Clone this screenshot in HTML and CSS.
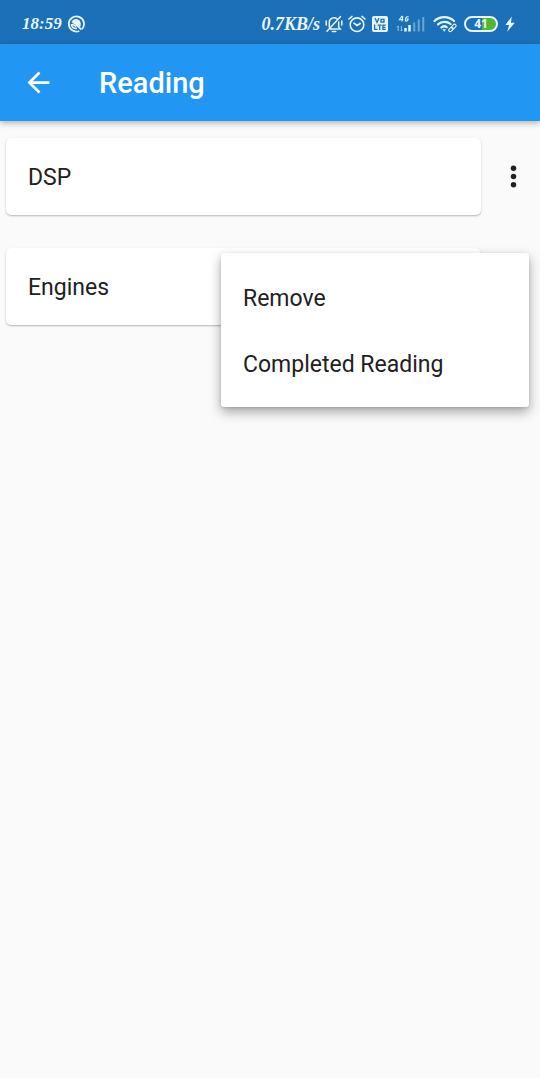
FILE: index.html
```html
<!DOCTYPE html>
<html lang="en">
<head>
<meta charset="utf-8">
<meta name="viewport" content="width=device-width, initial-scale=1">
<title>Reading</title>
<link rel="stylesheet" href="styles.css">
</head>
<body>
<div class="status-bar">
  <div class="status-group">
    <time class="status-text">18:59</time>
    <svg width="18" height="18" viewBox="0 0 18 18" fill="none" stroke="currentColor" aria-hidden="true">
      <path d="M14.9 14.2A7.6 7.6 0 1 0 12.3 16" stroke-width="1.8"/>
      <path d="M4.6 7.2C6 3.2 11.6 3 13.4 7c.8 2 .3 4-.5 5.4z" fill="currentColor" stroke="none"/>
      <path d="M9.2 9.6l5.2 5M4.4 9c0 2.8 2.2 4.8 5.6 4.4M5.5 9l3.6 2.6" stroke-width="1.6"/>
    </svg>
  </div>
  <div class="status-group status-right">
    <div class="status-group">
      <span class="status-text">0.7KB/s</span>
      <svg width="18" height="18" viewBox="0 0 18 18" fill="none" stroke="currentColor" stroke-width="1.5" stroke-linecap="round" aria-hidden="true">
        <path d="M4.3 12V7.4A4.7 4.7 0 0 1 12 3.8M13.7 7v5l1.5 2H5.4M7.3 16.4h3.5M2 16.3L15.6 1.6M1.2 6v4M16.8 6v4"/>
      </svg>
      <svg width="18" height="18" viewBox="0 0 18 18" fill="none" stroke="currentColor" stroke-width="1.6" stroke-linecap="round" aria-hidden="true">
        <circle cx="9" cy="9.7" r="6.8"/>
        <path d="M1 4l3-2.6M17 4l-3-2.6M6 8.2l3 2.3 3.2-2"/>
      </svg>
      <svg width="18" height="18" viewBox="0 0 18 18" role="img" aria-label="VoLTE">
        <rect x="1" y="1" width="16" height="16" rx="2" fill="currentColor"/>
        <g class="cutout" fill="none" stroke-width="1.3">
          <path d="M4 3l2 4.4L8 3M10 4.4h3v2.6h-3zM3.6 9.6v4.8h3M6.6 10.2h4M8.7 10.2v4.8M14.8 10.2h-2.9v4.2h2.9M12 12.3h2.5"/>
        </g>
      </svg>
    </div>
    <svg width="30" height="18" viewBox="0 0 30 18" fill="none" stroke="currentColor" role="img" aria-label="4G signal">
      <path d="M6.2 .8L3.4 4.8H7.4M6.8 1.2l-.8 5.2M12.6 2C9.8 .4 8.4 5.8 10 6.1c1.4.2 2-.8 2.2-2h-1.6" stroke-width="1.1"/>
      <path d="M2.2 16v-5l-1 1.2M5.3 11v5l1-1.2" stroke-width=".9" opacity=".7"/>
      <path d="M9.5 13v3.6M13.5 10v6.6" stroke-width="2.5"/>
      <path d="M18.2 7.5v9M22.7 4.5v12M27.3 2v14.5" stroke-width="2" opacity=".4"/>
    </svg>
    <svg width="24" height="18" viewBox="0 0 24 18" fill="none" stroke="currentColor" stroke-width="2.2" stroke-linecap="round" role="img" aria-label="Wi-Fi">
      <path d="M1.5 6C7 .9 15.5.9 21 6M5 9.4c3.7-3.3 9-3.3 12.5-.4M8.4 12.5c1.7-1.5 3.7-1.5 5.2-.3"/>
      <path d="M9.4 14.2h3.7l-1.9 2.6z" fill="currentColor" stroke="none"/>
      <g stroke-width="1.1"><rect x="15.4" y="12.9" width="5" height="3" rx="1.5" transform="rotate(-45 17.9 14.4)"/><rect x="18.3" y="10" width="5" height="3" rx="1.5" transform="rotate(-45 20.8 11.5)"/></g>
    </svg>
    <span class="battery">41</span>
    <svg width="10" height="18" viewBox="0 0 10 18" fill="currentColor" role="img" aria-label="Charging"><path d="M6.8 1.4L.4 10h3.7l-1.9 6.8L9.8 7.8H5.9z"/></svg>
  </div>
</div>
<header class="app-bar">
  <button class="icon-button back" aria-label="Back">
    <svg width="33" height="33" viewBox="0 0 24 24" fill="currentColor"><path d="M20 11H7.83l5.59-5.59L12 4l-8 8 8 8 1.41-1.41L7.83 13H20v-2z"/></svg>
  </button>
  <h1 class="title">Reading</h1>
</header>
<main class="list">
  <div class="row">
    <div class="card">DSP</div>
    <button class="icon-button more" aria-label="Options for DSP">
      <svg width="33" height="33" viewBox="0 0 24 24" fill="currentColor"><circle cx="12" cy="6" r="2"/><circle cx="12" cy="12" r="2"/><circle cx="12" cy="18" r="2"/></svg>
    </button>
  </div>
  <div class="row">
    <div class="card">Engines</div>
    <button class="icon-button more" aria-label="Options for Engines">
      <svg width="33" height="33" viewBox="0 0 24 24" fill="currentColor"><circle cx="12" cy="6" r="2"/><circle cx="12" cy="12" r="2"/><circle cx="12" cy="18" r="2"/></svg>
    </button>
    <div class="menu" role="menu">
      <button class="menu-item" role="menuitem">Remove</button>
      <button class="menu-item" role="menuitem">Completed Reading</button>
    </div>
  </div>
</main>
</body>
</html>
```
FILE: styles.css
```css
* { box-sizing: border-box; }

body {
  min-height: 100vh;
  margin: 0;
  background: #fafafa;
  color: #212121;
  font-family: Roboto, sans-serif;
  font-size: 23px;
  line-height: 32px;
}

button {
  border: 0;
  background: none;
  color: inherit;
  font: inherit;
  cursor: pointer;
}

svg { display: block; flex: none; }

.status-bar {
  display: flex;
  align-items: center;
  justify-content: space-between;
  height: 44px;
  padding: 3px 25px 0 22px;
  background: #1b70b7;
  color: #e8f5fc;
}

.status-group { display: flex; align-items: center; gap: 5px; }
.status-right { gap: 7px; }

.status-text {
  font: italic bold 17px/24px "Liberation Serif", serif;
}

.status-right .status-text { font-size: 18px; }

.cutout { stroke: #1b70b7; }

.battery {
  width: 34px;
  height: 16px;
  border: 2px solid #e8f5fc;
  border-radius: 8px;
  background: linear-gradient(to right, transparent 55%, #4fb82b 55%);
  background-clip: padding-box;
  font: bold 12px/12px "Open Sans", sans-serif;
  text-align: center;
}

.app-bar {
  position: relative;
  display: flex;
  align-items: center;
  gap: 44px;
  height: 77px;
  padding: 0 22px;
  background: #2196f3;
  color: #fff;
  box-shadow: 0 2px 6px rgba(0, 0, 0, .3);
}

.icon-button { display: grid; place-items: center; padding: 0; }

.title { margin: 0; font-size: 29px; font-weight: 500; line-height: 32px; }

.list {
  display: grid;
  gap: 33px;
  padding: 17px 0 17px 6px;
}

.row { position: relative; display: flex; align-items: stretch; }

.card {
  flex: 1;
  padding: 24px 22px 21px;
  border-radius: 5px;
  background: #fff;
  box-shadow: 0 1px 2px rgba(0, 0, 0, .28);
}

.more { width: 59px; padding-left: 6px; }

.menu {
  position: absolute;
  top: 5px;
  right: 11px;
  width: 308px;
  padding: 11px 0;
  border-radius: 3px;
  background: #fff;
  box-shadow: 0 5px 12px rgba(0, 0, 0, .34), 0 1px 3px rgba(0, 0, 0, .12);
}

.menu-item {
  display: block;
  width: 100%;
  padding: 19px 22px 15px;
  text-align: left;
}
```
